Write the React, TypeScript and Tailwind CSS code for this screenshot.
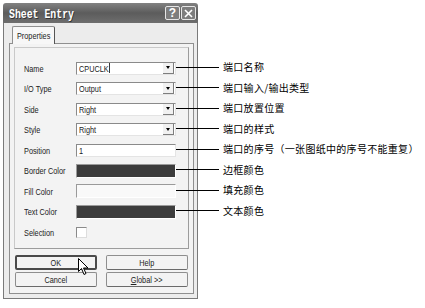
import React from 'react';

const rows = [
  { label: 'Name', kind: 'combo', value: 'CPUCLK', caret: true },
  { label: 'I/O Type', kind: 'combo', value: 'Output' },
  { label: 'Side', kind: 'combo', value: 'Right' },
  { label: 'Style', kind: 'combo', value: 'Right' },
  { label: 'Position', kind: 'edit', value: '1' },
  { label: 'Border Color', kind: 'color', value: 'bg-[#3c3c3c]' },
  { label: 'Fill Color', kind: 'color', value: 'bg-[#f9f9f9]' },
  { label: 'Text Color', kind: 'color', value: 'bg-[#3c3c3c]' },
];

const notes = [
  '端口名称',
  '端口输入/输出类型',
  '端口放置位置',
  '端口的样式',
  '端口的序号（一张图纸中的序号不能重复）',
  '边框颜色',
  '填充颜色',
  '文本颜色',
];

// the screenshot is squeezed sideways, so the UI text is drawn narrower than it is tall
function Txt({ children, center }: { children: React.ReactNode; center?: boolean }) {
  return (
    <span
      className={`inline-block whitespace-nowrap text-[9.5px] leading-none text-[#222] scale-x-[0.77] ${
        center ? 'origin-center' : 'origin-left'
      }`}
    >
      {children}
    </span>
  );
}

function Field({ row }: { row: (typeof rows)[number] }) {
  if (row.kind === 'color') {
    return (
      <div className={`w-[100px] h-[14px] border-t border-l border-t-[#9a9a9a] border-l-[#9a9a9a] border-b border-r border-b-white border-r-white ${row.value}`} />
    );
  }
  return (
    <div className="w-[100px] h-[13px] flex items-center bg-white border-t border-l border-t-[#8a8a8a] border-l-[#8a8a8a] border-b border-r border-b-[#e4e4e4] border-r-[#e4e4e4]">
      <span className="flex-1 pl-[2px] flex items-center">
        <Txt>
          {row.value}
          {row.caret && <span className="inline-block w-px h-[10px] bg-black align-middle -mt-[2px]" />}
        </Txt>
      </span>
      {row.kind === 'combo' && (
        <div className="w-[11px] h-[11px] mr-px flex items-center justify-center bg-[#f1f1f1] border-r border-b border-[#7d7d7d]">
          <div className="w-0 h-0 border-l-[2.5px] border-r-[2.5px] border-t-[3px] border-l-transparent border-r-transparent border-t-black" />
        </div>
      )}
    </div>
  );
}

function Btn({ children, def }: { children: React.ReactNode; def?: boolean }) {
  return (
    <div
      className={`h-[15px] flex items-center justify-center bg-[#f3f3f3] rounded-[2px] ${
        def ? 'border-2 border-[#4a4a4a]' : 'border border-[#8e8e8e] border-b-[#6a6a6a]'
      }`}
    >
      <Txt center>{children}</Txt>
    </div>
  );
}

export default function App() {
  return (
    <div
      className="relative w-[425px] h-[308px] bg-white overflow-hidden pl-[3px] pt-[3px]"
      style={{ fontFamily: '"Liberation Sans", Arial, sans-serif' }}
    >
      {/* dialog */}
      <div className="w-[195px] h-[296px] flex flex-col">
        <div className="h-[20px] flex items-center pl-[6px] pr-[2px] bg-gradient-to-b from-[#828282] via-[#5c5c5c] to-[#6e6e6e] rounded-t-[3px]">
          <span className="flex-1">
            <span
              className="inline-block origin-left scale-x-[0.82] whitespace-nowrap text-white font-bold text-[12px] leading-none"
              style={{ fontFamily: '"Liberation Mono", "Courier New", monospace', textShadow: '1px 1px 0 #333' }}
            >
              Sheet Entry
            </span>
          </span>
          <div className="flex gap-px">
            <div className="w-[15px] h-[14px] flex items-center justify-center border border-[#e6e6e6] rounded-[2px] bg-[#7d7d7d] text-white text-[12px] font-bold leading-none">
              ?
            </div>
            <div className="w-[15px] h-[14px] flex items-center justify-center border border-[#e6e6e6] rounded-[2px] bg-[#7d7d7d]">
              <svg width="9" height="9" viewBox="0 0 9 9">
                <path d="M1 1 L8 8 M8 1 L1 8" stroke="#fff" strokeWidth="1.6" />
              </svg>
            </div>
          </div>
        </div>
        <div className="flex-1 flex flex-col bg-[#ececec] border-x border-b border-[#7a7a7a] pl-[5px] pr-[3px] pt-[3px] pb-[4px]">
          {/* tab header */}
          <div className="flex">
            <div className="ml-[3px] w-[43px] h-[18px] flex items-center justify-center bg-[#f7f7f7] border-t border-l border-r border-[#8f8f8f] border-r-[#555] -mb-px z-10 rounded-t-[2px]">
              <Txt center>Properties</Txt>
            </div>
          </div>
          {/* tab panel */}
          <div className="flex-1 flex flex-col bg-[#f3f3f3] border border-[#8f8f8f] px-[4px] pt-[3px]">
            <div className="h-[202px] border border-[#c9c9c9] border-b-[#9c9c9c] border-r-[#9c9c9c] pl-[9px] pt-[10px]">
              {rows.map((r) => (
                <div key={r.label} className="h-[20.5px] flex items-center">
                  <span className="w-[52px] flex items-center">
                    <Txt>{r.label}</Txt>
                  </span>
                  <Field row={r} />
                </div>
              ))}
              <div className="h-[20.5px] flex items-center">
                <span className="w-[52px] flex items-center">
                  <Txt>Selection</Txt>
                </span>
                <div className="w-[11px] h-[11px] bg-white border-t border-l border-[#8a8a8a] border-b border-r border-b-[#ddd] border-r-[#ddd]" />
              </div>
            </div>
            <div className="grid grid-cols-2 gap-x-[9px] gap-y-[2px] mt-[6px] px-px">
              <Btn def>OK</Btn>
              <Btn>Help</Btn>
              <Btn>Cancel</Btn>
              <Btn>
                <span className="underline">G</span>lobal &gt;&gt;
              </Btn>
            </div>
          </div>
        </div>
      </div>

      {/* annotation callouts */}
      <div
        className="absolute left-[176px] top-[57px] flex flex-col"
        style={{ fontFamily: '"Noto Sans CJK SC", sans-serif' }}
      >
        {notes.map((n) => (
          <div key={n} className="h-[20.5px] flex items-center">
            <div className="w-[43px] h-px bg-black" />
            <span className="ml-[4px] text-[10px] tracking-[0.3px] text-black leading-none">{n}</span>
          </div>
        ))}
      </div>

      {/* mouse cursor */}
      <svg className="absolute left-[78px] top-[258px]" width="12" height="18" viewBox="0 0 12 18">
        <path d="M0.5 0.5 L0.5 13.5 L3.5 10.5 L6 16.5 L8 15.5 L5.5 10 L10 10 Z" fill="#fff" stroke="#000" strokeWidth="1" />
      </svg>
    </div>
  );
}
